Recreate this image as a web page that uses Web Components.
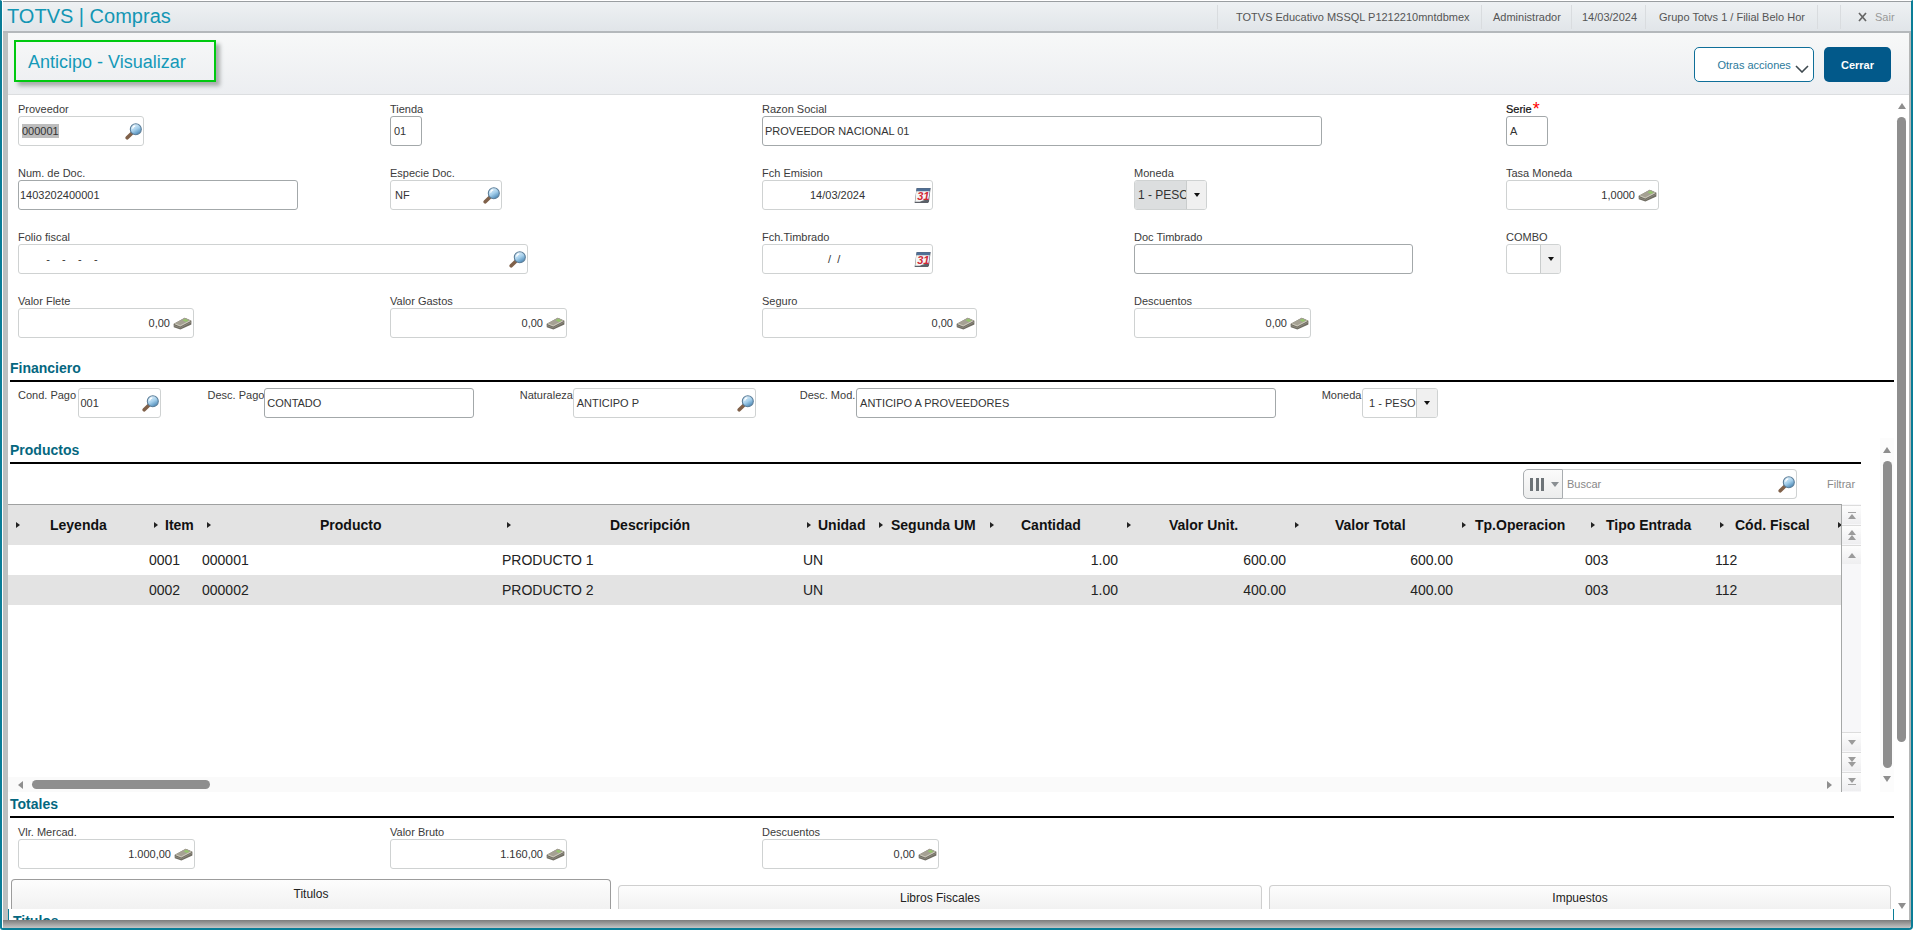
<!DOCTYPE html>
<html lang="es">
<head>
<meta charset="utf-8">
<title>TOTVS | Compras</title>
<style>
html,body{margin:0;padding:0;height:935px;overflow:hidden;background:#fff;font-family:"Liberation Sans",Arial,sans-serif;}
</style>
</head>
<body>
<app-window>
  <top-bar slot="top"></top-bar>
  <page-header slot="header" title="Anticipo - Visualizar"></page-header>

  <form-grid>
    <x-field label="Proveedor" w="126" kind="search" value="000001" selected></x-field>
    <x-field label="Tienda" w="32" value="01" dark></x-field>
    <x-field label="Razon Social" w="560" value="PROVEEDOR NACIONAL 01" dark pad="2"></x-field>
    <x-field style="grid-column:5" label="Serie" w="42" value="A" dark req></x-field>

    <x-field label="Num. de Doc." w="280" value="1403202400001" dark pad="1"></x-field>
    <x-field label="Especie Doc." w="112" kind="search" value="NF" pad="4"></x-field>
    <x-field label="Fch Emision" w="171" kind="date" value="14/03/2024" pad="47"></x-field>
    <x-field label="Moneda" w="73" kind="combo" btn="20" value="1 - PESO" fs="12" disabled></x-field>
    <x-field label="Tasa Moneda" w="153" kind="money" value="1,0000"></x-field>

    <x-field label="Folio fiscal" w="510" kind="search" value="    -    -    -    -" pad="15"></x-field>
    <x-field style="grid-column:3" label="Fch.Timbrado" w="171" kind="date" value="/  /" pad="65"></x-field>
    <x-field label="Doc Timbrado" w="279" dark></x-field>
    <x-field label="COMBO" w="55" kind="combo" btn="20"></x-field>

    <x-field label="Valor Flete" w="176" kind="money" value="0,00"></x-field>
    <x-field label="Valor Gastos" w="177" kind="money" value="0,00"></x-field>
    <x-field label="Seguro" w="215" kind="money" value="0,00"></x-field>
    <x-field label="Descuentos" w="177" kind="money" value="0,00"></x-field>
  </form-grid>

  <section-head top="20">Financiero</section-head>
  <fin-row>
    <x-field inline lw="59.5" gap="0" label="Cond. Pago" w="83" kind="search" value="001" pad="2"></x-field>
    <x-field inline lw="56.7" gap="47" label="Desc. Pago" w="210" value="CONTADO" dark pad="2"></x-field>
    <x-field inline lw="53" gap="45.5" label="Naturaleza" w="183" kind="search" value="ANTICIPO P"></x-field>
    <x-field inline lw="56.4" gap="44" label="Desc. Mod." w="420" value="ANTICIPO A PROVEEDORES" dark></x-field>
    <x-field inline lw="40.4" gap="45.6" label="Moneda" w="76" kind="combo" btn="21" value="1 - PESO" pad="6"></x-field>
  </fin-row>

  <products-panel>
    <section-head top="2">Productos</section-head>
    <grid-toolbar></grid-toolbar>
    <data-grid></data-grid>
  </products-panel>

  <section-head top="2">Totales</section-head>
  <form-grid tight>
    <x-field label="Vlr. Mercad." w="177" kind="money" value="1.000,00"></x-field>
    <x-field label="Valor Bruto" w="177" kind="money" value="1.160,00"></x-field>
    <x-field label="Descuentos" w="177" kind="money" value="0,00"></x-field>
  </form-grid>
  <tab-strip></tab-strip>
</app-window>

<script>
const ICONS = {
  search: `<svg width="17" height="17" viewBox="0 0 17 17"><defs><linearGradient id="l" x1="0.2" y1="0" x2="0.8" y2="1"><stop offset="0" stop-color="#e9f5fc"/><stop offset="0.5" stop-color="#a6d0ec"/><stop offset="1" stop-color="#3c7dae"/></linearGradient></defs><path d="M2.2 14.8 6.6 10.4" stroke="#80614a" stroke-width="3.6" stroke-linecap="round"/><circle cx="10.8" cy="6.2" r="5.5" fill="url(#l)" stroke="#5c7e99" stroke-width="1.1"/><path d="M7.6 5.6A3.4 3.4 0 0 1 10.2 2.9" stroke="#fff" stroke-width="1.1" fill="none"/></svg>`,
  money: `<svg width="19" height="13" viewBox="0 0 19 13"><path d="M.6 7 11.8.8 18.4 3.8v3.6L7.4 12.6.8 10.2z" fill="#6f6c62"/><path d="M.6 6.8 11.8.8 18.4 3.8 7.2 9.6z" fill="#a5a193"/><path d="M2.2 6.9 7.2 8.9 16.8 3.9" stroke="#d8d5c8" stroke-width=".8" fill="none"/><path d="M9.6 3.2 12.2 1.8l3.4 1.7-2.7 1.5z" fill="#96c56e"/><path d="M7.4 10.8 18.2 5.2M1 8.6l6.2 2.2" stroke="#9a978a" stroke-width=".7"/></svg>`,
  date: `<svg width="17" height="17" viewBox="0 0 17 17"><path d="M2.6 1h14l-1.6 13.6-.9 1.4H.6z" fill="#5b6068"/><path d="M2.8 1.2h13.5l-.5 3.2H2.3z" fill="#4f6f96"/><path d="M2.3 4.2h13.4L14.4 12.6c-3.2.2-6.2 1-8.6 2.2H1.2z" fill="#f6f6f6"/><text x="3.2" y="12.6" font-family="Liberation Sans" font-size="11" font-weight="700" font-style="italic" fill="#d02a38">31</text></svg>`,
  chevron: `<svg width="14" height="8" viewBox="0 0 14 8"><path d="M1 1l6 6 6-6" fill="none" stroke="#3f4a50" stroke-width="1.6"/></svg>`
};

class XIcon extends HTMLElement {
  connectedCallback(){
    const r = this.attachShadow({mode:'open'});
    r.innerHTML = `<style>:host{display:inline-flex;line-height:0}</style>${ICONS[this.getAttribute('name')]}`;
  }
}
customElements.define('x-icon', XIcon);

class AppWindow extends HTMLElement {
  constructor(){
    super();
    this.attachShadow({mode:'open'}).innerHTML = `<style>
      :host{display:flex;flex-direction:column;box-sizing:border-box;width:1913px;height:930px;
        border-top:1px solid #fff;border-left:2px solid #0a7d97;border-right:2px solid #0a7d97;border-bottom:2px solid #0a7d97;
        border-bottom-right-radius:4px;border-bottom-left-radius:3px;padding-left:1px;background:#fff;overflow:hidden;
        font-family:"Liberation Sans",Arial,sans-serif;}
      .mid{display:flex;flex:1;min-height:0}
      .l{width:5px;background:#bcc0c0;flex:none}
      .r{width:2px;background:#b4b6b6;flex:none}
      .center{flex:1;display:flex;flex-direction:column;min-width:0}
      .body{flex:1;display:flex;min-height:0}
      main{width:1886px;height:825px;overflow:hidden;flex:none;background:#fff}
      .outer{width:15px;flex:none;display:flex;flex-direction:column;align-items:center;background:#fff}
      .up{margin-top:8px;width:0;height:0;border:4.5px solid transparent;border-top:0;border-bottom:6px solid #8e8e8e}
      .thumb{width:9px;height:625px;margin-top:8px;border-radius:5px;background:#8e8e8e}
      .down{margin-top:161px;width:0;height:0;border:4.5px solid transparent;border-bottom:0;border-top:6px solid #8e8e8e}
      .shade{height:8px;background:linear-gradient(#7c7c7c,#c4c4c4);flex:none}
    </style>
    <slot name="top"></slot>
    <div class="mid"><div class="l"></div>
      <div class="center"><slot name="header"></slot>
        <div class="body"><main><slot></slot></main>
          <div class="outer"><div class="up"></div><div class="thumb"></div><div class="down"></div></div>
        </div></div>
      <div class="r"></div></div>
    <div class="shade"></div>`;
  }
}
customElements.define('app-window', AppWindow);

class TopBar extends HTMLElement {
  constructor(){
    super();
    this.attachShadow({mode:'open'}).innerHTML = `<style>
      :host{display:flex;align-items:center;box-sizing:border-box;height:32px;flex:none;
        border-top:1px solid #9a9ea1;border-bottom:2px solid #b4b8bb;background:linear-gradient(#eef1f3,#e1e5e9);color:#555;font-size:11px}
      .brand{font-size:20px;color:#1396b4;padding-left:4px;margin-right:auto;line-height:29px}
      .c{height:24px;line-height:24px;border-left:1px solid #d9dcdf;box-sizing:border-box;white-space:nowrap;overflow:hidden}
      .x{display:inline-block;vertical-align:-1px;margin-right:8px}
      .sair{color:#999}
    </style>
    <div class="brand">TOTVS | Compras</div>
    <div class="c" style="width:264px;padding-left:18px">TOTVS Educativo MSSQL P1212210mntdbmex</div>
    <div class="c" style="width:90px;padding-left:11px">Administrador</div>
    <div class="c" style="width:74px;padding-left:10px">14/03/2024</div>
    <div class="c" style="width:172px;padding-left:13px">Grupo Totvs 1 / Filial Belo Hor</div>
    <div class="c" style="width:23px"></div>
    <div class="c sair" style="width:71px;padding-left:17px"><svg class="x" width="9" height="10" viewBox="0 0 9 10"><path d="M1 1l7 8M8 1 1 9" stroke="#666" stroke-width="1.7"/></svg>Sair</div>`;
  }
}
customElements.define('top-bar', TopBar);

class PageHeader extends HTMLElement {
  connectedCallback(){
    this.attachShadow({mode:'open'}).innerHTML = `<style>
      :host{display:flex;box-sizing:border-box;height:62px;flex:none;padding-right:18px;
        background:linear-gradient(#f7f8f8,#eceef1);border-bottom:1px solid #dcdee0}
      .title{box-sizing:border-box;width:202px;height:42px;margin:7px 0 0 6px;border:2px solid #00c910;box-shadow:4px 4px 4px #a9adad;
        font-size:18px;line-height:36px;padding:2px 0 0 12px;color:#1499b8;white-space:nowrap}
      .sp{flex:1}
      button{font-family:inherit;box-sizing:border-box;height:35px;margin-top:14px;border-radius:5px;padding:0;cursor:pointer}
      .more{width:120.5px;background:#fff;border:1px solid #0f6f99;color:#2b7a9b;font-size:11px;display:flex;align-items:center;padding-left:23px;white-space:nowrap}
      .more x-icon{margin:9px 0 0 4px}
      .close{width:67px;margin-left:10px;background:#02598a;border:0;color:#fff;font-weight:700;font-size:11px}
    </style>
    <div class="title">${this.getAttribute('title')}</div><div class="sp"></div>
    <button class="more">Otras acciones<x-icon name="chevron"></x-icon></button>
    <button class="close">Cerrar</button>`;
  }
}
customElements.define('page-header', PageHeader);

class FormGrid extends HTMLElement {
  constructor(){
    super();
    this.attachShadow({mode:'open'}).innerHTML = `<style>
      :host{display:grid;grid-template-columns:repeat(5,372px);grid-auto-rows:45px;row-gap:19px;padding:6px 0 0 10px}
    </style><slot></slot>`;
  }
}
customElements.define('form-grid', FormGrid);

class FinRow extends HTMLElement {
  constructor(){
    super();
    this.attachShadow({mode:'open'}).innerHTML = `<style>
      :host{display:flex;margin-top:6px;padding-left:10px;height:30px}
    </style><slot></slot>`;
  }
}
customElements.define('fin-row', FinRow);

class XField extends HTMLElement {
  connectedCallback(){
    const a = n => this.getAttribute(n);
    const has = n => this.hasAttribute(n);
    const kind = a('kind') || 'text', val = a('value') || '', inline = has('inline');
    const right = kind === 'money';
    const pad = a('pad') !== null ? +a('pad') : 3;
    const icon = (kind === 'search' || kind === 'money' || kind === 'date')
      ? `<x-icon class="ic ${kind}" name="${kind}"></x-icon>` : '';
    const value = has('selected') ? `<span class="sel">${val}</span>` : val;
    const body = kind === 'combo'
      ? `<div class="txt">${value}</div><div class="btn"><i></i></div>`
      : `<div class="txt">${value}</div>${icon}`;
    this.attachShadow({mode:'open'}).innerHTML = `<style>
      :host{display:${inline ? 'flex' : 'block'};font-size:11px;color:#333;${inline ? `margin-left:${a('gap')}px;` : ''}}
      .lab{line-height:${inline ? 15 : 17}px;height:15px;white-space:nowrap;color:#3b3b3b;${inline ? `width:${a('lw')}px;flex:none;` : ''}}
      .lab.req{color:#111;-webkit-text-stroke:.2px #111}
      .lab b{color:#f00;font-size:18px;font-weight:400;line-height:10px;-webkit-text-stroke:0;vertical-align:-2px;margin-left:1px}
      .box{box-sizing:border-box;height:30px;width:${a('w')}px;border:1px solid ${has('dark') ? '#a3a8aa' : '#cfd2d2'};border-radius:3px;background:#fff;display:flex;align-items:center;overflow:hidden}
      .txt{flex:1;min-width:0;height:100%;line-height:28px;white-space:pre;overflow:hidden;padding-left:${pad}px;color:#333;${a('fs') ? `font-size:${a('fs')}px;` : ''}${right ? 'text-align:right;padding-right:3px;' : ''}${has('disabled') ? 'background:#dcdedf;' : ''}}
      .sel{background:#bdbdbd;color:#333;padding:1px 0}
      .ic{flex:none;margin-right:1px}
      .money{margin-top:1px}
      .btn{flex:none;box-sizing:border-box;width:${a('btn')}px;height:100%;background:#f0f0f0;border-left:1px solid #c9cccc;display:flex;align-items:center;justify-content:center}
      .btn i{width:0;height:0;border:3.5px solid transparent;border-bottom:0;border-top:4px solid #111}
    </style>
    <div class="lab ${has('req') ? 'req' : ''}">${a('label')}${has('req') ? '<b>*</b>' : ''}</div>
    <div class="box">${body}</div>`;
  }
}
customElements.define('x-field', XField);

class SectionHead extends HTMLElement {
  connectedCallback(){
    this.attachShadow({mode:'open'}).innerHTML = `<style>
      :host{display:block;margin:${this.getAttribute('top') || 0}px 0 0 2px;height:22px;line-height:20px;
        border-bottom:2px solid #000;font-size:14px;font-weight:700;color:#05677f}
    </style><slot></slot>`;
  }
}
customElements.define('section-head', SectionHead);

class ProductsPanel extends HTMLElement {
  constructor(){
    super();
    this.attachShadow({mode:'open'}).innerHTML = `<style>
      :host{display:flex;margin-top:20px;height:354px}
      .left{width:1853px;flex:none}
      .sb{width:14px;margin-left:19px;background:#fcfcfc;display:flex;flex-direction:column;align-items:center}
      .up{margin-top:9px;width:0;height:0;border:4.5px solid transparent;border-top:0;border-bottom:6px solid #8e8e8e}
      .thumb{width:9px;height:307px;margin-top:8px;border-radius:5px;background:#8e8e8e}
      .down{margin-top:8px;width:0;height:0;border:4.5px solid transparent;border-bottom:0;border-top:6px solid #8e8e8e}
    </style>
    <div class="left"><slot></slot></div>
    <div class="sb"><div class="up"></div><div class="thumb"></div><div class="down"></div></div>`;
  }
}
customElements.define('products-panel', ProductsPanel);

class GridToolbar extends HTMLElement {
  constructor(){
    super();
    this.attachShadow({mode:'open'}).innerHTML = `<style>
      :host{display:flex;justify-content:flex-end;align-items:center;height:30px;margin-top:5px;font-size:11px;padding-right:6px}
      .cols{box-sizing:border-box;width:40px;height:30px;border:1px solid #a9adb0;border-radius:5px 0 0 5px;background:linear-gradient(#fbfbfb,#eceded);display:flex;align-items:center;padding-left:6px}
      .bars{display:flex;gap:2.6px}
      .bars i{width:3px;height:13px;background:#6d7377}
      .car{margin-left:7px;width:0;height:0;border:4px solid transparent;border-bottom:0;border-top:5px solid #8a8f93}
      .find{box-sizing:border-box;width:234px;height:30px;border:1px solid #cfd2d2;border-left:0;border-radius:0 4px 4px 0;display:flex;align-items:center;color:#888;padding-left:4px}
      .find span{flex:1}
      .find x-icon{margin-right:1px}
      .filt{margin-left:30px;color:#8a8a8a;width:28px;white-space:nowrap}
    </style>
    <div class="cols"><div class="bars"><i></i><i></i><i></i></div><div class="car"></div></div>
    <div class="find"><span>Buscar</span><x-icon name="search"></x-icon></div>
    <div class="filt">Filtrar</div>`;
  }
}
customElements.define('grid-toolbar', GridToolbar);

class DataGrid extends HTMLElement {
  constructor(){
    super();
    const widths = [141,53,300,301,72,111,137,168,167,127,130,119,5];
    const tpl = widths.map(w => w + 'px').join(' ');
    // [label, padding before arrow, space between arrow and label]
    const head = [
      ['Leyenda',8,30],['Item',5,7],['Producto',5,109],['Descripción',5,99],['Unidad',4,7],['Segunda UM',4,8],
      ['Cantidad',4,27],['Valor Unit.',4,38],['Valor Total',4,36],['Tp.Operacion',4,9],['Tipo Entrada',6,11],['Cód. Fiscal',5,11],['',4,0]
    ];
    const rows = [
      ['', '0001','000001','PRODUCTO 1','UN','', '1.00','600.00','600.00','','003','112',''],
      ['', '0002','000002','PRODUCTO 2','UN','', '1.00','400.00','400.00','','003','112','']
    ];
    const rightAlign = new Set([6,7,8]);
    const hCells = head.map(([t,p,g]) => `<div class="h" style="padding-left:${p}px"><i></i><span style="margin-left:${g}px">${t}</span></div>`).join('');
    const rHtml = rows.map(r => `<div class="row">${r.map((t,i) => `<div class="${rightAlign.has(i) ? 'ra' : ''}">${t}</div>`).join('')}</div>`).join('');
    const btn = (n, up, line) => {
      const tris = Array.from({length:n}, () => `<i class="${up ? 't-up' : 't-down'}"></i>`).join('');
      return `<div class="vb">${line && up ? '<u></u>' : ''}${tris}${line && !up ? '<u></u>' : ''}</div>`;
    };
    this.attachShadow({mode:'open'}).innerHTML = `<style>
      :host{display:flex;height:288px;margin-top:5px;font-size:14px;color:#222}
      .main{width:1834px;flex:none;display:flex;flex-direction:column;box-sizing:border-box;border-top:1px solid #9fa1a1;border-right:1px solid #a6a8a8;overflow:hidden}
      .hd,.row{display:grid;grid-template-columns:${tpl};flex:none}
      .hd{height:40px;background:#e3e3e3;color:#111;font-weight:700;align-items:center}
      .h{display:flex;align-items:center;white-space:nowrap}
      .h i{flex:none;width:0;height:0;border:3.2px solid transparent;border-right:0;border-left:4px solid #222}
      .row{height:30px;line-height:30px;white-space:nowrap}
      .row:nth-child(even){background:#e3e3e3}
      .row .ra{text-align:right;padding-right:5px}
      .sp{flex:1}
      .hs{height:15px;flex:none;background:#fafafa;display:flex;align-items:center}
      .hl{margin-left:10px;width:0;height:0;border:4.5px solid transparent;border-left:0;border-right:5px solid #8e8e8e}
      .ht{margin-left:9px;width:178px;height:9px;border-radius:5px;background:#8e8e8e}
      .hr{margin-left:auto;margin-right:9px;width:0;height:0;border:4.5px solid transparent;border-right:0;border-left:5px solid #8e8e8e}
      .vs{width:19px;flex:none;display:flex;flex-direction:column;background:#f7f7f9;padding-top:1px;box-sizing:border-box}
      .vb{height:19px;margin-bottom:1px;background:linear-gradient(#fdfdfd,#eeeef0);border-top:1px solid #dcdcdc;box-sizing:border-box;display:flex;flex-direction:column;align-items:center;justify-content:center}
      .vb u{display:block;width:8px;height:1px;background:#a4a4a4;margin:1px 0}
      .t-up,.t-down{display:block;width:0;height:0;border:4px solid transparent}
      .t-up{border-top:0;border-bottom:5px solid #9b9b9b}
      .t-down{border-bottom:0;border-top:5px solid #9b9b9b}
      .vsp{flex:1}
    </style>
    <div class="main"><div class="hd">${hCells}</div><div>${rHtml}</div><div class="sp"></div>
      <div class="hs"><div class="hl"></div><div class="ht"></div><div class="hr"></div></div></div>
    <div class="vs">${btn(1,true,true)}${btn(2,true,false)}${btn(1,true,false)}<div class="vsp"></div>${btn(1,false,false)}${btn(2,false,false)}${btn(1,false,true)}</div>`;
  }
}
customElements.define('data-grid', DataGrid);

class TabStrip extends HTMLElement {
  constructor(){
    super();
    this.attachShadow({mode:'open'}).innerHTML = `<style>
      :host{display:block;margin-top:10px;font-size:12px;color:#222}
      .tabs{display:flex;align-items:flex-end;height:30px;padding-left:3px}
      .t{box-sizing:border-box;text-align:center;border:1px solid #cfcfcf;border-bottom:0;border-radius:4px 4px 0 0;background:linear-gradient(#fdfdfd,#f1f1f1);height:24px;line-height:25px}
      .a{height:30px;border-color:#9c9c9c;line-height:28px}
      .panel{box-sizing:border-box;height:30px;border-left:1.5px solid #0a7d97;border-right:1.5px solid #0a7d97;padding:4px 0 0 4px;font-size:14px;font-weight:700;color:#05677f;line-height:16px}
    </style>
    <div class="tabs">
      <div class="t a" style="width:600px">Titulos</div>
      <div class="t" style="width:644px;margin-left:7px">Libros Fiscales</div>
      <div class="t" style="width:622px;margin-left:7px">Impuestos</div>
    </div>
    <div class="panel">Titulos</div>`;
  }
}
customElements.define('tab-strip', TabStrip);
</script>
</body>
</html>
